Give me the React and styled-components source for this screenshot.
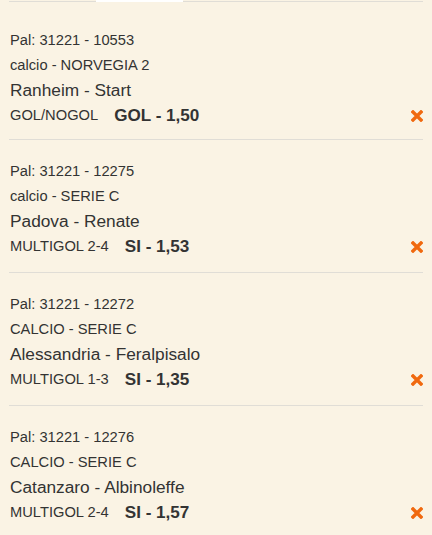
import styled, { createGlobalStyle } from 'styled-components';

const GlobalStyle = createGlobalStyle`
  html, body {
    margin: 0;
    padding: 0;
    background: #faf3e4;
  }
  body {
    font-family: "Liberation Sans", Arial, sans-serif;
    color: #333;
  }
`;

const Page = styled.div`
  width: 432px;
  height: 535px;
  overflow: hidden;
  background: #faf3e4;
  padding: 0 9px;
  box-sizing: border-box;
`;

const Tabs = styled.div`
  display: flex;
  height: 2px;
`;

const Tab = styled.div`
  width: ${(p) => p.width || 'auto'};
  flex: ${(p) => (p.grow ? 1 : 'none')};
  box-sizing: border-box;
  background: ${(p) => (p.active ? '#fff' : 'transparent')};
  border-bottom: ${(p) => (p.active ? 'none' : '1px solid #e0ddd6')};
  height: 2px;
`;

const List = styled.div`
  padding-top: 6px;
`;

const Item = styled.div`
  padding: 19px 0 13px 1px;
  border-bottom: 1px solid #e0ddd6;

  &:first-child {
    padding-top: 20px;
    padding-bottom: 11px;
  }
`;

const Line = styled.div`
  height: 25px;
  line-height: 25px;
  font-size: ${(p) => (p.big ? '17.3px' : '14.7px')};
  white-space: nowrap;
`;

const BetRow = styled.div`
  display: flex;
  align-items: center;
  height: 25px;
  line-height: 25px;
`;

const Market = styled.span`
  font-size: 14.7px;
`;

const Pick = styled.span`
  font-size: 17.1px;
  font-weight: bold;
  margin-left: 16px;
`;

const Remove = styled.button`
  margin-left: auto;
  border: none;
  background: none;
  padding: 0;
  width: 13px;
  height: 13px;
  display: flex;
  align-items: center;
  justify-content: center;
  cursor: pointer;
`;

const bets = [
  { pal: 'Pal: 31221 - 10553', league: 'calcio - NORVEGIA 2', match: 'Ranheim - Start', market: 'GOL/NOGOL', pick: 'GOL - 1,50' },
  { pal: 'Pal: 31221 - 12275', league: 'calcio - SERIE C', match: 'Padova - Renate', market: 'MULTIGOL 2-4', pick: 'SI - 1,53' },
  { pal: 'Pal: 31221 - 12272', league: 'CALCIO - SERIE C', match: 'Alessandria - Feralpisalo', market: 'MULTIGOL 1-3', pick: 'SI - 1,35' },
  { pal: 'Pal: 31221 - 12276', league: 'CALCIO - SERIE C', match: 'Catanzaro - Albinoleffe', market: 'MULTIGOL 2-4', pick: 'SI - 1,57' },
];

const CloseIcon = () => (
  <svg width="12" height="12" viewBox="0 0 12 12">
    <path d="M2 2 L10 10 M10 2 L2 10" stroke="#f0690f" strokeWidth="3.4" strokeLinecap="square" />
  </svg>
);

export default function App() {
  return (
    <>
      <GlobalStyle />
      <Page>
        <Tabs>
          <Tab width="87px" />
          <Tab width="87px" active />
          <Tab grow />
        </Tabs>
        <List>
          {bets.map((b) => (
            <Item key={b.pal}>
              <Line>{b.pal}</Line>
              <Line>{b.league}</Line>
              <Line big>{b.match}</Line>
              <BetRow>
                <Market>{b.market}</Market>
                <Pick>{b.pick}</Pick>
                <Remove aria-label="rimuovi">
                  <CloseIcon />
                </Remove>
              </BetRow>
            </Item>
          ))}
        </List>
      </Page>
    </>
  );
}
